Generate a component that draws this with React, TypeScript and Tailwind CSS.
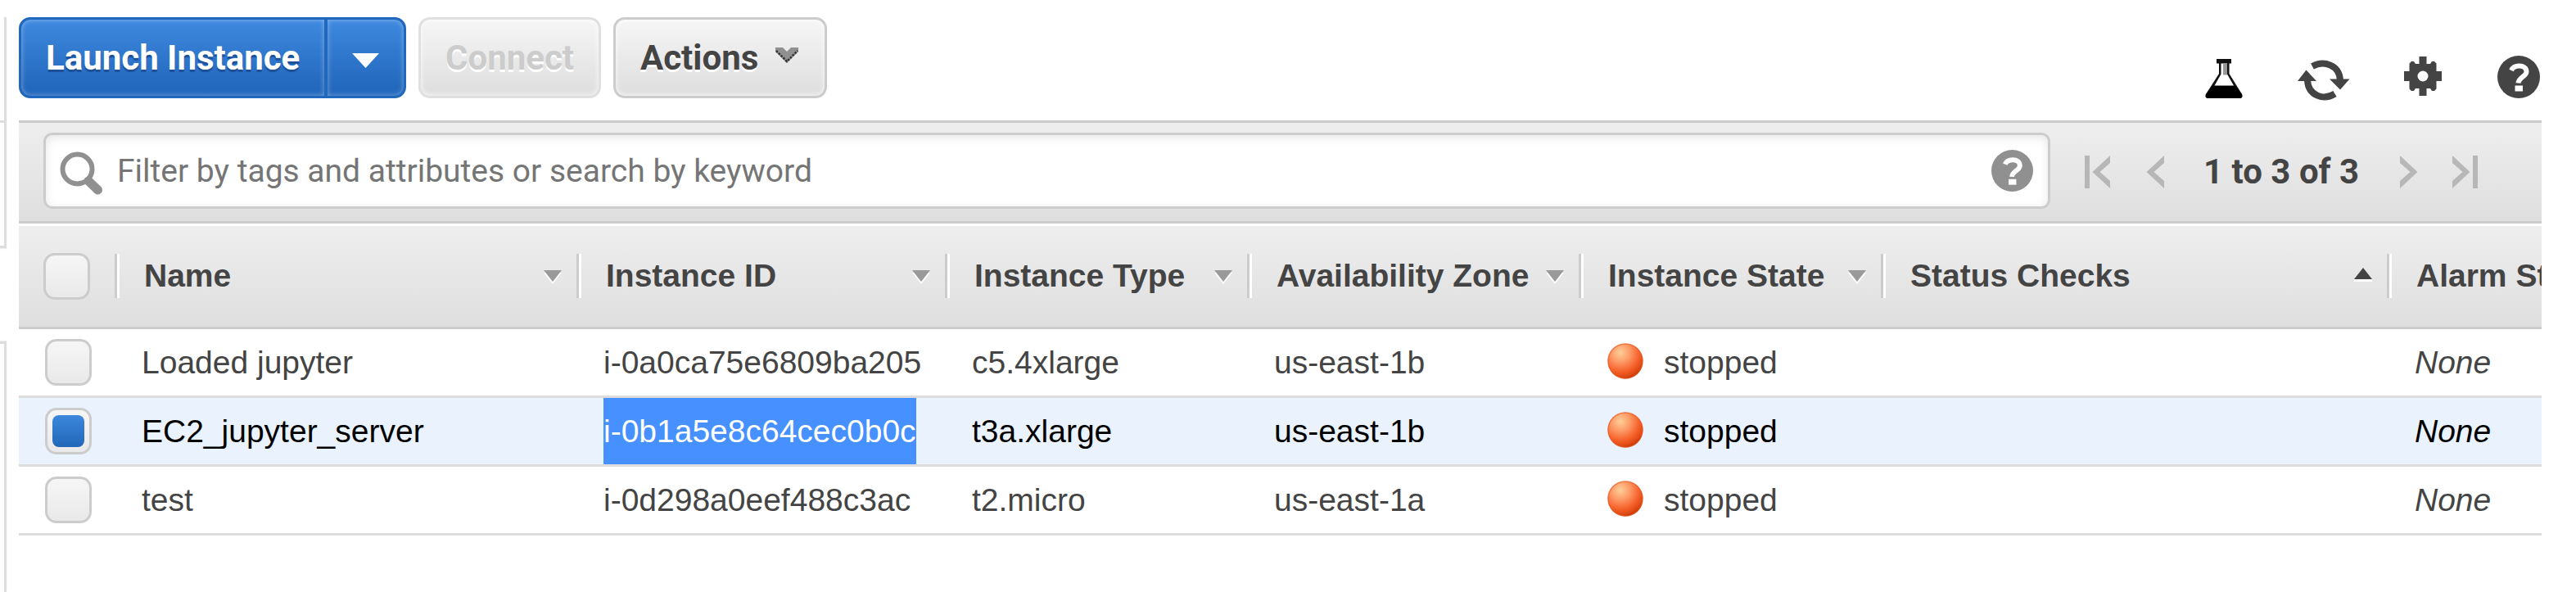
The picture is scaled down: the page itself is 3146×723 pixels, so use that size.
import React from "react";

const headers = [
  { label: "Name", cls: "w-[564px]", sort: "down" },
  { label: "Instance ID", cls: "w-[450px]", sort: "down" },
  { label: "Instance Type", cls: "w-[369px]", sort: "down" },
  { label: "Availability Zone", cls: "w-[405px]", sort: "down" },
  { label: "Instance State", cls: "w-[369px]", sort: "down" },
  { label: "Status Checks", cls: "w-[618px]", sort: "up" },
  { label: "Alarm Status", cls: "w-[564px]", sort: "" },
];

const rows = [
  { name: "Loaded jupyter", id: "i-0a0ca75e6809ba205", type: "c5.4xlarge", zone: "us-east-1b", selected: false },
  { name: "EC2_jupyter_server", id: "i-0b1a5e8c64cec0b0c", type: "t3a.xlarge", zone: "us-east-1b", selected: true },
  { name: "test", id: "i-0d298a0eef488c3ac", type: "t2.micro", zone: "us-east-1a", selected: false },
];

function HelpIcon({ className, mark }: { className: string; mark: string }) {
  return (
    <svg viewBox="0 0 52 52" className={className}>
      <circle cx="26" cy="26" r="26" fill="currentColor" />
      <path d="M17 18C19 13.500 22 12.500 26.500 12.500C32 12.500 35.500 15 35.500 19.500C35.500 25.500 26 26.500 25.500 33.500" fill="none" stroke={mark} strokeWidth="6" />
      <rect x="21.500" y="36.500" width="9.500" height="7" fill={mark} />
    </svg>
  );
}

function FlaskIcon() {
  return (
    <svg viewBox="0 0 46 48" className="h-12 w-[46px]">
      <path d="M14 0H32V5.500H29.500V18L45 43Q46.500 48 42 48H4Q-0.500 48 1 43L17 18V5.500H14Z" fill="#111" />
      <path d="M19.500 5.500H27V18.500L35 32.500H11.500L19.500 18.500Z" fill="#fff" />
      <rect x="22" y="5.500" width="5" height="14" fill="#999" />
      <path d="M9 33H37L45 43Q46.500 48 42 48H4Q-0.500 48 1 43Z" fill="#000" />
    </svg>
  );
}

function RefreshIcon() {
  return (
    <svg viewBox="0 0 64 50" className="h-[50px] w-16">
      <path d="M18 8C32 0.500 51 6 52 25" fill="none" stroke="#444" strokeWidth="8" />
      <path d="M39 23.500H63.500L52 36.500Z" fill="#444" />
      <path d="M45.500 41.500C32 50 13 44 12 25" fill="none" stroke="#444" strokeWidth="8" />
      <path d="M0 26H23L10.500 12.500Z" fill="#444" />
    </svg>
  );
}

function GearIcon() {
  return (
    <svg viewBox="0 0 46 48" className="h-12 w-[46px]">
      <path
        fillRule="evenodd"
        fill="#444"
        d="M18.500 0H27.500V9H32L34 6H37L39.500 8.500V18H46V30H39.500V39.500L37 42H34L32 39H27.500V48H18.500V39H14L12 42H9L6.500 39.500V30H0V18H6.500V8.500L9 6H12L14 9H18.500ZM23 17.500A6.500 6.500 0 1 0 23 30.500A6.500 6.500 0 1 0 23 17.500Z"
      />
    </svg>
  );
}

function SearchIcon() {
  return (
    <svg viewBox="0 0 54 54" className="h-[54px] w-[54px] text-[#909090]">
      <circle cx="21.500" cy="21.500" r="18" fill="none" stroke="currentColor" strokeWidth="6" />
      <path d="M35 36L46.500 47" stroke="currentColor" strokeWidth="11" strokeLinecap="round" />
    </svg>
  );
}

function PageArrow({ flip, bar }: { flip?: boolean; bar?: boolean }) {
  return (
    <svg viewBox={bar ? "0 0 31 40" : "0 0 22 40"} className={(bar ? "w-[31px]" : "w-[22px]") + " h-10 shrink-0" + (flip ? " -scale-x-100" : "")}>
      {bar && <rect x="0" y="0" width="6" height="40" fill="#b7b7b7" />}
      <path d={bar ? "M31 0V9L18.500 20L31 31V40L9.500 20Z" : "M22 0V9L9.500 20L22 31V40L0.500 20Z"} fill="#b7b7b7" />
    </svg>
  );
}

function SortArrow({ up }: { up: boolean }) {
  return (
    <svg viewBox="0 0 22 18" className={(up ? "-mt-[4px]" : "mt-[4px]") + " h-[18px] w-[22px] shrink-0"}>
      {up ? (
        <>
          <path d="M0 15H22V18H0Z" fill="#fff" />
          <path d="M11 1L22 15H0Z" fill="#444" />
        </>
      ) : (
        <>
          <path d="M0 3H22L11 17Z" fill="#fff" />
          <path d="M0 0H22L11 14Z" fill="#999" />
        </>
      )}
    </svg>
  );
}

function Checkbox({ checked }: { checked?: boolean }) {
  return (
    <div className="flex h-[57px] w-[57px] shrink-0 items-center justify-center rounded-[14px] border-[3px] border-[#ccc] bg-linear-to-b from-[#f6f6f6] to-[#e9e9e9]">
      {checked && <div className="h-[39px] w-[39px] rounded-[8px] bg-linear-to-b from-[#3c87dc] to-[#2267ba]" />}
    </div>
  );
}

function StateBall() {
  return (
    <svg viewBox="0 0 44 44" className="h-11 w-11 shrink-0">
      <defs>
        <radialGradient id="ball" cx="0.36" cy="0.26" r="0.78">
          <stop offset="0" stopColor="#ffcf98" />
          <stop offset="0.35" stopColor="#fc9a66" />
          <stop offset="0.68" stopColor="#f6622c" />
          <stop offset="0.88" stopColor="#e04a14" />
          <stop offset="1" stopColor="#b83000" />
        </radialGradient>
      </defs>
      <circle cx="22" cy="22" r="21.500" fill="url(#ball)" />
      <circle cx="22" cy="22" r="21" fill="none" stroke="#e8581f" strokeOpacity="0.6" strokeWidth="1.500" />
    </svg>
  );
}

export default function App() {
  return (
    <div className="flex h-[723px] w-[3146px] overflow-hidden bg-white font-['Liberation_Sans',Arial,sans-serif] text-[39px] leading-[45px] text-[#444]">
      <aside className="flex w-[23px] shrink-0 flex-col pt-[21px]">
        <div className="h-[282px] w-2 border-r-[3px] border-b-[3px] border-[#ddd] shadow-[0_1px_1px_#eee]">
          <div className="mt-[126px] h-[3px] bg-[#ddd]" />
        </div>
        <div className="mt-[114px] w-2 flex-1 border-t-[3px] border-r-[3px] border-[#ddd] shadow-[0_-1px_1px_#eee]" />
      </aside>

      <main className="flex w-[3081px] shrink-0 flex-col overflow-hidden">
        <div className="flex h-[147px] shrink-0 items-start pt-[21px] font-[Roboto,sans-serif] text-[42px] font-bold">
          <div className="flex h-[99px] w-[473px] shrink-0 overflow-hidden rounded-[14px] border-[3px] border-[#2067be] bg-[#2067be] text-white">
            <button className="flex w-[370px] items-center rounded-l-[11px] bg-linear-to-b from-[#3e89df] to-[#2268bd] to-90% pl-[30px] whitespace-nowrap shadow-[inset_0_0_6px_rgba(255,255,255,0.4)] [text-shadow:0_3px_1px_#1c5099]">
              Launch Instance
            </button>
            <div className="w-[4px] bg-[#2067be]" />
            <button className="flex flex-1 items-center justify-center rounded-r-[11px] bg-linear-to-b from-[#3e89df] to-[#2268bd] to-90% shadow-[inset_0_0_6px_rgba(255,255,255,0.4)]">
              <svg viewBox="0 0 33 18" className="mt-[7px] h-[18px] w-[33px]">
                <path d="M0 0H33L16.500 18Z" fill="#fff" />
              </svg>
            </button>
          </div>
          <button className="ml-[15px] flex h-[99px] w-[223px] items-center justify-center rounded-[14px] border-[3px] border-[#e0e0e0] bg-linear-to-b from-[#f6f6f6] to-[#e0e0e0] to-90% text-[#ccc] shadow-[inset_0_0_6px_rgba(255,255,255,0.9)] [text-shadow:0_3px_0_#fff]">
            Connect
          </button>
          <button className="ml-[15px] flex h-[99px] w-[261px] items-center rounded-[14px] border-[3px] border-[#ccc] bg-linear-to-b from-[#f6f6f6] to-[#e0e0e0] to-90% pl-[30px] shadow-[inset_0_0_6px_rgba(255,255,255,0.9)] [text-shadow:0_3px_0_#fff]">
            <span className="w-[165px] shrink-0 text-left">Actions</span>
            <svg viewBox="0 0 28 20" className="-mt-[7px] h-5 w-7">
              <path d="M0 1H9L14 6L19 1H28V6L14 20L0 6Z" fill="#909090" />
              <path d="M1 5L14 18L27 5" fill="none" stroke="#333" strokeWidth="2.500" strokeDasharray="2.500 1.500" />
            </svg>
          </button>
          <div className="ml-auto flex items-start pt-[47px] pr-[2px] text-[#444]">
            <div className="mt-[4px]"><FlaskIcon /></div>
            <div className="mt-[5px] ml-[67px]"><RefreshIcon /></div>
            <div className="mt-px ml-[66px]"><GearIcon /></div>
            <HelpIcon className="ml-[68px] h-[52px] w-[52px]" mark="#fff" />
          </div>
        </div>

        <div className="flex h-[126px] shrink-0 items-center border-y-[3px] border-[#ccc] bg-linear-to-b from-[#eeeeee] to-[#dfdfdf] pl-[30px] font-[Roboto,sans-serif]">
          <div className="-mt-[3px] flex h-[93px] w-[2451px] shrink-0 items-center rounded-[11px] border-[3px] border-[#ccc] bg-white pr-[18px] pl-[17px] shadow-[inset_0_3px_12px_rgba(0,0,0,0.1)]">
            <div className="mt-[6px]"><SearchIcon /></div>
            <span className="mt-[2px] ml-[16px] flex-1 text-[39px] text-[#757575]">Filter by tags and attributes or search by keyword</span>
            <HelpIcon className="h-[51px] w-[51px] text-[#909090]" mark="#fff" />
          </div>
          <div className="flex h-full items-center pl-[42px] text-[42px] font-bold whitespace-nowrap">
            <PageArrow bar />
            <div className="ml-[44px] flex"><PageArrow /></div>
            <span className="-mt-px ml-[48px] w-[190px]">1 to 3 of 3</span>
            <div className="ml-[50px] flex"><PageArrow flip /></div>
            <div className="ml-[42px] flex"><PageArrow bar flip /></div>
          </div>
        </div>

        <div className="mt-[3px] flex h-[126px] shrink-0 items-center border-b-[3px] border-[#ccc] bg-linear-to-b from-[#eeeeee] to-[#dfdfdf] pl-[30px] font-bold">
          <Checkbox />
          <div className="-mt-[1px] ml-[30px] flex">
            {headers.map((h) => (
              <div key={h.label} className={h.cls + " flex h-[54px] shrink-0 items-center border-l-[3px] border-[#ccc] pr-[18px] whitespace-nowrap"}>
                <div className="h-full w-[3px] bg-white" />
                <span className="-mt-px ml-[30px] flex-1">{h.label}</span>
                {h.sort && <SortArrow up={h.sort === "up"} />}
              </div>
            ))}
          </div>
        </div>

        {rows.map((r) => (
          <div key={r.name} className={"flex h-[84px] shrink-0 items-center border-b-[3px] border-[#ddd] pl-8 whitespace-nowrap " + (r.selected ? "bg-[#eaf2fe] text-black" : "bg-white")}>
            <Checkbox checked={r.selected} />
            <span className="ml-[61px] w-[564px] shrink-0">{r.name}</span>
            <div className="flex h-full w-[450px] shrink-0">
              <span className={"flex h-full items-center " + (r.selected ? "bg-[#4690ff] text-white" : "")}>{r.id}</span>
            </div>
            <span className="w-[369px] shrink-0">{r.type}</span>
            <span className="w-[407px] shrink-0">{r.zone}</span>
            <div className="flex w-[986px] shrink-0 items-center">
              <div className="-mt-[3px] flex"><StateBall /></div>
              <span className="ml-[25px]">stopped</span>
            </div>
            <span className="italic">None</span>
          </div>
        ))}
      </main>
    </div>
  );
}
